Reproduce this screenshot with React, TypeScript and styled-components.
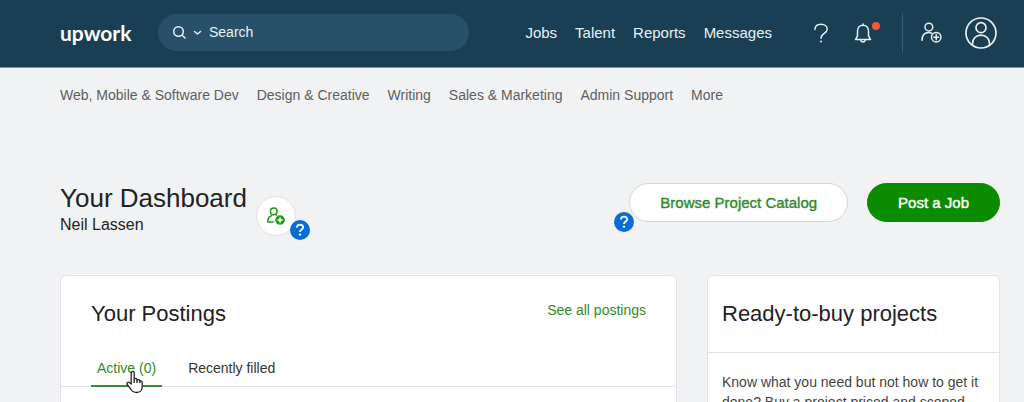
import React from "react";
import styled, { createGlobalStyle } from "styled-components";

const GlobalStyle = createGlobalStyle`
  *, *::before, *::after { box-sizing: border-box; }
  body {
    margin: 0;
    background: #f1f2f4;
    color: #222;
    font-family: "Liberation Sans", Arial, sans-serif;
    font-size: 14px;
    line-height: 20px;
  }
  h1, h2, p { margin: 0; font-weight: 400; }
  a { color: inherit; text-decoration: none; }
  button { font: inherit; color: inherit; cursor: pointer; padding: 0; border: 0; background: none; }
`;

const Page = styled.div`
  height: 100vh;
  overflow: hidden;
`;

const Header = styled.header`
  display: flex;
  align-items: center;
  height: 68px;
  padding: 0 27px 2px 60px;
  background: #1a3f54;
  border-bottom: 1px solid #7d93ab;
  color: #e9f1f5;
`;

const Logo = styled.a`
  width: 98px;
  font-family: Lato, sans-serif;
  font-size: 21px;
  font-weight: 700;
  line-height: 28px;
  color: #fff;
`;

const SearchBox = styled.form`
  display: flex;
  align-items: center;
  flex: 0 1 311px;
  height: 37px;
  padding-left: 14px;
  border-radius: 19px;
  background: #285069;
`;

const ScopeButton = styled.button`
  display: flex;
  align-items: center;
  gap: 6px;
  margin-right: 7px;
`;

const SearchInput = styled.input`
  flex: 1;
  min-width: 0;
  padding: 0 0 2px;
  border: 0;
  outline: 0;
  background: transparent;
  color: inherit;
  font: inherit;
  &::placeholder { color: #e9f1f5; opacity: 1; }
`;

const MainNav = styled.nav`
  display: flex;
  gap: 18px;
  margin-left: auto;
  font-size: 15px;
`;

const HeaderTools = styled.div`
  display: flex;
  align-items: center;
  margin-left: 40px;
`;

const ToolButton = styled.button<{ $gap?: number }>`
  position: relative;
  display: flex;
  margin-left: ${(p) => p.$gap ?? 0}px;
`;

const AlertDot = styled.span`
  position: absolute;
  top: -1px;
  right: -8px;
  width: 8px;
  height: 8px;
  border-radius: 50%;
  background: #f2592e;
`;

const Divider = styled.span`
  width: 1px;
  height: 40px;
  margin: 0 18px 0 30px;
  background: #365a6f;
`;

const CategoryNav = styled.nav`
  display: flex;
  gap: 18px;
  padding: 17px 24px 0 60px;
  color: #5e5e5e;
`;

const Main = styled.main`
  padding: 0 24px 0 60px;
`;

const TitleRow = styled.div`
  display: flex;
  align-items: flex-start;
  margin-top: 78px;
  height: 92px;
`;

const Title = styled.h1`
  font-size: 26px;
  line-height: 30px;
`;

const UserName = styled.p`
  font-size: 16px;
  line-height: 24px;
`;

const InviteButton = styled.button`
  position: relative;
  display: flex;
  align-items: center;
  justify-content: center;
  width: 40px;
  height: 40px;
  margin: 13px 0 0 9px;
  border: 1px solid #dedfe1;
  border-radius: 50%;
  background: #fff;
  color: #239a1b;
`;

const Actions = styled.div`
  display: flex;
  gap: 19px;
  margin-left: auto;
`;

const PillWrap = styled.div`
  position: relative;
`;

const Pill = styled.button<{ $primary?: boolean }>`
  height: 39px;
  padding: 0 30px;
  border: 1px solid ${(p) => (p.$primary ? "#0b8c00" : "#d3d5d6")};
  border-radius: 20px;
  background: ${(p) => (p.$primary ? "#0b8c00" : "#fff")};
  color: ${(p) => (p.$primary ? "#fff" : "#2f8a2b")};
  font-size: 15px;
  -webkit-text-stroke: 0.4px;
`;

const HelpBadge = styled.span<{ $side: "left" | "right" }>`
  position: absolute;
  bottom: ${(p) => (p.$side === "left" ? -10 : -5)}px;
  ${(p) => p.$side}: -15px;
  display: flex;
  color: #fff;
`;

const Columns = styled.div`
  display: grid;
  grid-template-columns: minmax(0, 1fr) 293px;
  gap: 30px;
`;

const Card = styled.section`
  min-height: 240px;
  border: 1px solid #e0e2e5;
  border-radius: 6px;
  background: #fff;
`;

const CardHead = styled.div<{ $side?: boolean }>`
  display: flex;
  justify-content: space-between;
  height: 77px;
  padding: ${(p) => (p.$side ? "24px 14px 0" : "24px 30px 0")};
  border-bottom: ${(p) => (p.$side ? "1px solid #dfe1e3" : "0")};
`;

const CardTitle = styled.h2`
  font-size: 22px;
  line-height: 28px;
`;

const CardLink = styled.a`
  color: #2f8a2b;
`;

const Tabs = styled.div`
  display: flex;
  gap: 20px;
  height: 34px;
  padding: 0 30px;
  border-bottom: 1px solid #e0e2e5;
`;

const Tab = styled.button<{ $active?: boolean }>`
  position: relative;
  height: 34px;
  padding: 0 6px 2px;
  border-bottom: 2px solid ${(p) => (p.$active ? "#3c8c35" : "transparent")};
  color: ${(p) => (p.$active ? "#2f8a2b" : "#333")};
`;

const Pointer = styled.svg`
  position: absolute;
  left: 35px;
  top: 17px;
  z-index: 1;
`;

const CardText = styled.p`
  padding: 19px 14px;
  color: #444;
`;

const HelpMark = () => (
  <svg width="20" height="20" viewBox="0 0 20 20" fill="none">
    <circle cx="10" cy="10" r="10" fill="#086dd6" />
    <path d="M6.9 7.6C6.9 5.7 8.1 4.6 10 4.6s3.1 1.1 3.1 2.7c0 1.3-.8 1.9-1.7 2.5-1 .6-1.4 1.1-1.4 2.3" stroke="#fff" strokeWidth="1.9" />
    <circle cx="10" cy="14.6" r="1.2" fill="#fff" />
  </svg>
);

const AddUser = ({ solid }: { solid?: boolean }) => (
  <svg width={solid ? 18 : 21} height={solid ? 18 : 21} viewBox="0 0 20 20" fill="none" stroke="currentColor" strokeWidth={solid ? 1.7 : 1.4} strokeLinecap="round">
    <circle cx="7.5" cy="4.8" r="3.7" />
    <path d={solid ? "M7 16.7H1v-2.2C1.3 12 3 10.4 5.4 9.5M9.5 8.5l1 .5" : "M1 17.5C1 12.7 3.5 10 7.5 10c1 0 1.9.2 2.7.6"} />
    <circle cx="14.5" cy="14.5" r="4.5" fill={solid ? "currentColor" : "none"} />
    <path d="M14.5 12.2v4.6M12.2 14.5h4.6" stroke={solid ? "#fff" : "currentColor"} />
  </svg>
);

export default function App() {
  return (
    <>
      <GlobalStyle />
      <Page>
        <Header>
          <Logo href="#">upwork</Logo>
          <SearchBox role="search">
            <ScopeButton type="button" aria-label="Search scope">
              <svg width="15" height="15" viewBox="0 0 15 15" fill="none" stroke="currentColor" strokeWidth="1.5" strokeLinecap="round">
                <circle cx="6.5" cy="6.5" r="4.8" />
                <path d="M10.2 10.2l2.8 2.8" />
              </svg>
              <svg width="9" height="6" viewBox="0 0 9 6" fill="none" stroke="currentColor" strokeWidth="1.5" strokeLinecap="round" strokeLinejoin="round">
                <path d="M1.5 1.5l3 2.5 3-2.5" />
              </svg>
            </ScopeButton>
            <SearchInput type="search" aria-label="Search" placeholder="Search" />
          </SearchBox>
          <MainNav aria-label="Main">
            <a href="#">Jobs</a>
            <a href="#">Talent</a>
            <a href="#">Reports</a>
            <a href="#">Messages</a>
          </MainNav>
          <HeaderTools>
            <ToolButton aria-label="Help">
              <svg width="18" height="20" viewBox="0 0 18 20" fill="none" stroke="currentColor" strokeWidth="1.4" strokeLinecap="round">
                <path d="M3 6.5C3 3 5.5 1.2 9 1.2s6.2 2 6.2 5c0 4.4-6.2 4-6.2 9" />
                <circle cx="9" cy="18.5" r=".4" />
              </svg>
            </ToolButton>
            <ToolButton aria-label="Notifications" $gap={24}>
              <svg width="18" height="20" viewBox="0 0 18 20" fill="none" stroke="currentColor" strokeWidth="1.5" strokeLinecap="round" strokeLinejoin="round">
                <path d="M9 .9v1.3M3.5 8.2c0-3.7 2.3-6 5.5-6s5.5 2.3 5.5 6v4.6l2 3.7h-15l2-3.7z" />
                <path d="M6.8 17.5c.4 1.2 1.2 1.6 2.2 1.6s1.8-.4 2.2-1.6" />
              </svg>
              <AlertDot />
            </ToolButton>
            <Divider />
            <ToolButton aria-label="Invite a teammate">
              <AddUser />
            </ToolButton>
            <ToolButton aria-label="Account" $gap={23}>
              <svg width="32" height="32" viewBox="0 0 32 32" fill="none" stroke="currentColor" strokeWidth="1.7">
                <circle cx="16" cy="16" r="15" />
                <circle cx="16" cy="10.7" r="5" />
                <path d="M7.500 28V26.500c0-4.900 3.600-8.300 8.500-8.300s8.500 3.400 8.500 8.300V28" />
              </svg>
            </ToolButton>
          </HeaderTools>
        </Header>
        <CategoryNav aria-label="Categories">
          <a href="#">Web, Mobile &amp; Software Dev</a>
          <a href="#">Design &amp; Creative</a>
          <a href="#">Writing</a>
          <a href="#">Sales &amp; Marketing</a>
          <a href="#">Admin Support</a>
          <a href="#">More</a>
        </CategoryNav>
        <Main>
          <TitleRow>
            <div>
              <Title>Your Dashboard</Title>
              <UserName>Neil Lassen</UserName>
            </div>
            <InviteButton aria-label="Invite a teammate">
              <AddUser solid />
              <HelpBadge $side="right"><HelpMark /></HelpBadge>
            </InviteButton>
            <Actions>
              <PillWrap>
                <Pill>Browse Project Catalog</Pill>
                <HelpBadge $side="left"><HelpMark /></HelpBadge>
              </PillWrap>
              <Pill $primary>Post a Job</Pill>
            </Actions>
          </TitleRow>
          <Columns>
            <Card>
              <CardHead>
                <CardTitle>Your Postings</CardTitle>
                <CardLink href="#">See all postings</CardLink>
              </CardHead>
              <Tabs role="tablist">
                <Tab role="tab" aria-selected="true" $active>
                  Active (0)
                  <Pointer width="18" height="24" viewBox="0 0 18 24" fill="#fff" stroke="#222" strokeWidth="1.3" strokeLinejoin="round" aria-hidden="true">
                    <path d="M5.2 14V3c0-2.2 3-2.2 3 0v6.5c0-1.5 2.8-1.5 2.8.3v.7c0-1.4 2.7-1.3 2.7.4v.8c0-1.2 2.500-1.1 2.500.6V17c0 3-2 5.5-5.500 5.5-3.3 0-4.900-1.5-6.200-3.8L1.2 14.5c-1-1.8 1.2-3.1 2.4-1.7z" />
                    <path d="M8.2 9.5V13M11 10.5V13M13.7 11.5V13" />
                  </Pointer>
                </Tab>
                <Tab role="tab" aria-selected="false">Recently filled</Tab>
              </Tabs>
            </Card>
            <Card>
              <CardHead $side>
                <CardTitle>Ready-to-buy projects</CardTitle>
              </CardHead>
              <CardText>
                Know what you need but not how to get it done? Buy a project priced and scoped
              </CardText>
            </Card>
          </Columns>
        </Main>
      </Page>
    </>
  );
}
